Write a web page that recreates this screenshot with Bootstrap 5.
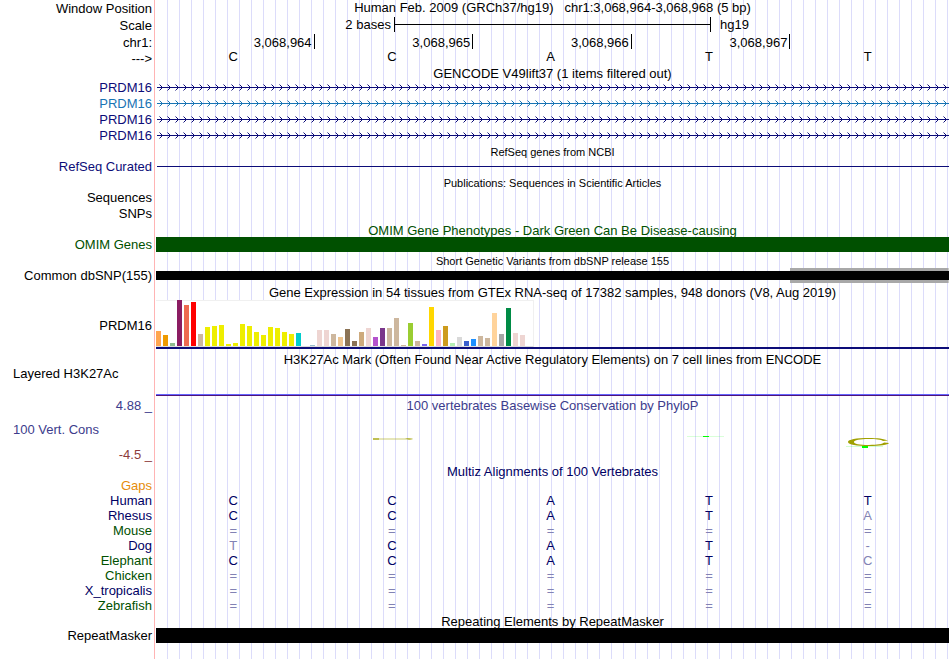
<!DOCTYPE html>
<html lang="en">
<head>
<meta charset="utf-8">
<meta name="viewport" content="width=device-width, initial-scale=1">
<title>Genome tracks, chr1:3,068,964-3,068,968</title>
<link rel="stylesheet" href="https://cdn.jsdelivr.net/npm/bootstrap@5.3.0/dist/css/bootstrap.min.css">
<style>
body { font: 13px/16px "Liberation Sans", Arial, sans-serif; color: #000; background: #fff; }
/* label column, pink separator, then one guide line every 12px */
.browser {
  background:
    linear-gradient(90deg, #fff 154px, #ffb4b4 154px, #ffb4b4 155px, #fff 155px, #fff 156px, transparent 156px),
    repeating-linear-gradient(90deg, transparent 0, transparent 11px, #dcdcfa 11px, #dcdcfa 12px);
  padding-right: 1px;
}
.side { width: 156px; flex: none; padding-right: 4px; text-align: right; white-space: nowrap; }
.line { display: flex; height: 16px; }
.line-15 { height: 15px; line-height: 15px; }
.line-head { line-height: 18px; }
.data { flex: 1 1 0; min-width: 0; white-space: nowrap; text-align: center; }
.title { height: 15px; line-height: 17px; margin: 0 0 0 156px; text-align: center; white-space: nowrap; font-size: 13px; font-weight: 400; }
.title-14 { height: 14px; line-height: 15px; }
.title-16 { height: 16px; line-height: 18px; }
.title-17 { height: 17px; line-height: 20px; }
.title-low { line-height: 22px; }
.heading { line-height: 16px; }
.note { font-size: 11px; }
.line-scale { height: 18px; line-height: 20px; }
.scale-left { width: 30%; padding-right: 3px; line-height: 18px; }
.scale-right { width: 30%; padding-left: 9px; line-height: 18px; }
.scale-bar { width: 40%; height: 15px; margin-top: 1px; border: solid #000; border-width: 0 1px; display: flex; align-items: center; }
.scale-bar span { height: 1px; width: 100%; background: #000; }
.pos { flex: 1 1 0; height: 15px; line-height: 17px; padding-right: 2px; text-align: right; border-right: 1px solid transparent; }
.tick { border-color: #000; }
.base { flex: 1 1 0; padding-right: 4px; text-align: center; }
.bases { line-height: 14px; }
.arrows { display: block; width: 100%; height: 16px; }
.navy { color: #0c0c78; }
.blue { color: #1874b4; }
.forest { color: #005000; }
.indigo { color: #3c3c8c; }
.brick { color: #8c3c3c; }
.orange { color: #e68c0a; }
.deep { color: #000064; }
.refline { height: 1px; background: #0c0c78; margin: 7px 0 0 1px; }
.bar-omim { background: #005000; }
.bar-solid { background: #000; }
.snp { display: flex; align-items: center; background: linear-gradient(#a8a8a8, #a8a8a8) right / 20% 100% no-repeat; }
.snp span { height: 9px; width: 100%; background: #000; }
.gtex { height: 49px; }
.gtex .side { line-height: 51px; }
.gtex .data { border-bottom: 2px solid #0c0c78; }
.plot { width: 378px; height: 47px; background: #fff; border: solid #f0f0f0; border-width: 1px 1px 0 0; border-bottom: 1px solid #dcdcdc; display: flex; align-items: flex-end; gap: 2px; }
.plot span { width: 5px; flex: none; }
.signal { height: 30px; margin-bottom: 2px; }
.signal .data { background: linear-gradient(#6464ff 1px, #501478 1px) bottom / 100% 2px no-repeat; }
.side-start { text-align: left; padding-left: 13px; }
.cons { height: 50px; }
.cons .side-start { padding-top: 8px; }
.cons .low { margin-top: 9px; }
.logo { display: block; width: 60px; height: 50px; margin: 0 auto; }
.align { width: 100%; table-layout: fixed; border-collapse: collapse; color: #000064; }
.align th, .align td { height: 15px; line-height: 15px; padding: 0 4px 0 0; font-weight: 400; text-align: center; }
.align th { width: 156px; text-align: right; }
.align .dim { color: #8282b4; }
</style>
<script src="https://cdn.jsdelivr.net/npm/bootstrap@5.3.0/dist/js/bootstrap.bundle.min.js"></script>
</head>
<body>
<svg width="0" height="0" class="position-absolute" aria-hidden="true">
  <defs>
    <pattern id="chevN" x="3" y="0" width="8" height="16" patternUnits="userSpaceOnUse"><path d="M.5 4.5L3.5 7.5L.5 10.5" fill="none" stroke="#0c0c78"/></pattern>
    <pattern id="chevB" x="3" y="0" width="8" height="16" patternUnits="userSpaceOnUse"><path d="M.5 4.5L3.5 7.5L.5 10.5" fill="none" stroke="#1874b4"/></pattern>
  </defs>
</svg>
<main class="browser d-flex flex-column min-vh-100">
  <div class="line line-head"><div class="side">Window Position</div><div class="data heading">Human Feb. 2009 (GRCh37/hg19) &nbsp; chr1:3,068,964-3,068,968 (5 bp)</div></div>
  <div class="line line-scale"><div class="side">Scale</div>
    <div class="data d-flex"><div class="scale-left text-end">2 bases</div><div class="scale-bar"><span></span></div><div class="scale-right text-start">hg19</div></div></div>
  <div class="line line-head"><div class="side">chr1:</div>
    <div class="data d-flex"><div class="pos tick">3,068,964</div><div class="pos tick">3,068,965</div><div class="pos tick">3,068,966</div><div class="pos tick">3,068,967</div><div class="pos"></div></div></div>
  <div class="line line-head"><div class="side">---&gt;</div>
    <div class="data d-flex bases"><div class="base">C</div><div class="base">C</div><div class="base">A</div><div class="base">T</div><div class="base">T</div></div></div>

  <h2 class="title title-14">GENCODE V49lift37 (1 items filtered out)</h2>
  <div class="line navy"><div class="side">PRDM16</div><div class="data"><svg class="arrows"><rect x="1" y="7" width="100%" height="1" fill="#0c0c78"/><rect x="3" width="100%" height="16" fill="url(#chevN)"/></svg></div></div>
  <div class="line blue"><div class="side">PRDM16</div><div class="data"><svg class="arrows"><rect x="1" y="7" width="100%" height="1" fill="#1874b4"/><rect x="3" width="100%" height="16" fill="url(#chevB)"/></svg></div></div>
  <div class="line navy"><div class="side">PRDM16</div><div class="data"><svg class="arrows"><rect x="1" y="7" width="100%" height="1" fill="#0c0c78"/><rect x="3" width="100%" height="16" fill="url(#chevN)"/></svg></div></div>
  <div class="line navy"><div class="side">PRDM16</div><div class="data"><svg class="arrows"><rect x="1" y="7" width="100%" height="1" fill="#0c0c78"/><rect x="3" width="100%" height="16" fill="url(#chevN)"/></svg></div></div>

  <h2 class="title note">RefSeq genes from NCBI</h2>
  <div class="line navy"><div class="side">RefSeq Curated</div><div class="data"><div class="refline"></div></div></div>
  <h2 class="title note">Publications: Sequences in Scientific Articles</h2>
  <div class="line"><div class="side">Sequences</div></div>
  <div class="line"><div class="side">SNPs</div></div>

  <h2 class="title forest">OMIM Gene Phenotypes - Dark Green Can Be Disease-causing</h2>
  <div class="line line-15"><div class="side forest">OMIM Genes</div><div class="data bar-omim"></div></div>
  <h2 class="title title-16 note">Short Genetic Variants from dbSNP release 155</h2>
  <div class="line line-15"><div class="side">Common dbSNP(155)</div><div class="data snp"><span></span></div></div>

  <h2 class="title title-17">Gene Expression in 54 tissues from GTEx RNA-seq of 17382 samples, 948 donors (V8, Aug 2019)</h2>
  <div class="line gtex"><div class="side">PRDM16</div><div class="data"><div class="plot" id="plot"></div></div></div>

  <h2 class="title title-17 title-low">H3K27Ac Mark (Often Found Near Active Regulatory Elements) on 7 cell lines from ENCODE</h2>
  <div class="line signal"><div class="side side-start">Layered H3K27Ac</div><div class="data"></div></div>

  <div class="line indigo"><div class="side">4.88 _</div><div class="data">100 vertebrates Basewise Conservation by PhyloP</div></div>
  <div class="line cons">
    <div class="side side-start"><div class="indigo">100 Vert. Cons</div><div class="brick text-end low">-4.5 _</div></div>
    <div class="data d-flex">
      <div class="base"></div>
      <div class="base"><svg class="logo" viewBox="0 0 60 50"><path d="M11 24h39l1 1-2 1H11z" fill="#a0a000" opacity=".28"/><path d="M11 24h6v2h-6zM43 24h4l4 1-4 1z" fill="#a0a000" opacity=".55"/></svg></div>
      <div class="base"></div>
      <div class="base"><svg class="logo" viewBox="0 0 60 50"><path d="M8 22h37v1H8z" fill="#00ff00" opacity=".15"/><path d="M24 22h6v1h-6z" fill="#00ff00"/></svg></div>
      <div class="base"><svg class="logo" viewBox="0 0 60 50"><path d="M8 32h37v1H8z" fill="#00ff00" opacity=".18"/><path fill="#a0a000" d="M50 26.600C46 24.700 39 24 31 24C18 24 10 25.500 10 28C10 30.700 19 32 31 32C42 32 50 31 51 29L46 28.600C45 30.300 39 31 31 31C21 31 16 30 16 28C16 26 22 25 31 25C38 25 43 25.500 45 27Z"/><path d="M24 32h6v2h-6z" fill="#00ff00"/></svg></div>
    </div>
  </div>

  <h2 class="title title-14 deep">Multiz Alignments of 100 Vertebrates</h2>
  <table class="align">
    <tbody>
      <tr><th scope="row" class="orange">Gaps</th><td></td><td></td><td></td><td></td><td></td></tr>
      <tr><th scope="row">Human</th><td>C</td><td>C</td><td>A</td><td>T</td><td>T</td></tr>
      <tr><th scope="row">Rhesus</th><td>C</td><td>C</td><td>A</td><td>T</td><td class="dim">A</td></tr>
      <tr class="dim"><th scope="row" class="forest">Mouse</th><td>=</td><td>=</td><td>=</td><td>=</td><td>=</td></tr>
      <tr><th scope="row">Dog</th><td class="dim">T</td><td>C</td><td>A</td><td>T</td><td class="dim">-</td></tr>
      <tr><th scope="row" class="forest">Elephant</th><td>C</td><td>C</td><td>A</td><td>T</td><td class="dim">C</td></tr>
      <tr class="dim"><th scope="row" class="forest">Chicken</th><td>=</td><td>=</td><td>=</td><td>=</td><td>=</td></tr>
      <tr class="dim"><th scope="row" class="deep">X_tropicalis</th><td>=</td><td>=</td><td>=</td><td>=</td><td>=</td></tr>
      <tr class="dim"><th scope="row" class="forest">Zebrafish</th><td>=</td><td>=</td><td>=</td><td>=</td><td>=</td></tr>
    </tbody>
  </table>

  <h2 class="title">Repeating Elements by RepeatMasker</h2>
  <div class="line line-15"><div class="side">RepeatMasker</div><div class="data bar-solid"></div></div>
</main>
<script>
// expression level (px) and tissue colour
const tissues = [
  [15,"#ffa54f"],[11,"#ee9a00"],[3,"#8fbc8f"],[46,"#8b1c62"],[41,"#ee6a50"],[44,"#ff0000"],[12,"#cdb79e"],
  [19,"#eeee00"],[20,"#eeee00"],[21,"#eeee00"],[2,"#eeee00"],[3,"#eeee00"],[22,"#eeee00"],[20,"#eeee00"],[14,"#eeee00"],
  [11,"#eeee00"],[19,"#eeee00"],[18,"#eeee00"],[14,"#eeee00"],[12,"#eeee00"],[13,"#00cdcd"],[0,"#ee82ee"],[1,"#9ac0cd"],
  [16,"#eed5d2"],[16,"#eed5d2"],[12,"#cdb79e"],[9,"#eec591"],[17,"#8b7355"],[5,"#8b7355"],[14,"#cdaa7d"],[18,"#eed5d2"],
  [9,"#b452cd"],[18,"#7a378b"],[18,"#cdb79e"],[28,"#cdb79e"],[1,"#cdb79e"],[23,"#9acd32"],[5,"#cdb79e"],[2,"#7a67ee"],
  [39,"#ffd700"],[16,"#ffb6c1"],[20,"#cd9b1d"],[3,"#b4eeb4"],[9,"#d9d9d9"],[5,"#3a5fcd"],[7,"#1e90ff"],[10,"#cdb79e"],
  [8,"#cdb79e"],[33,"#ffd39b"],[12,"#a6a6a6"],[38,"#008b45"],[13,"#eed5d2"],[11,"#eed5d2"],[0,"#ff00ff"]
];
const plot = document.getElementById("plot");
for (const [level, colour] of tissues) {
  const bar = document.createElement("span");
  bar.style.height = level + "px";
  bar.style.background = colour;
  plot.append(bar);
}
</script>
</body>
</html>
